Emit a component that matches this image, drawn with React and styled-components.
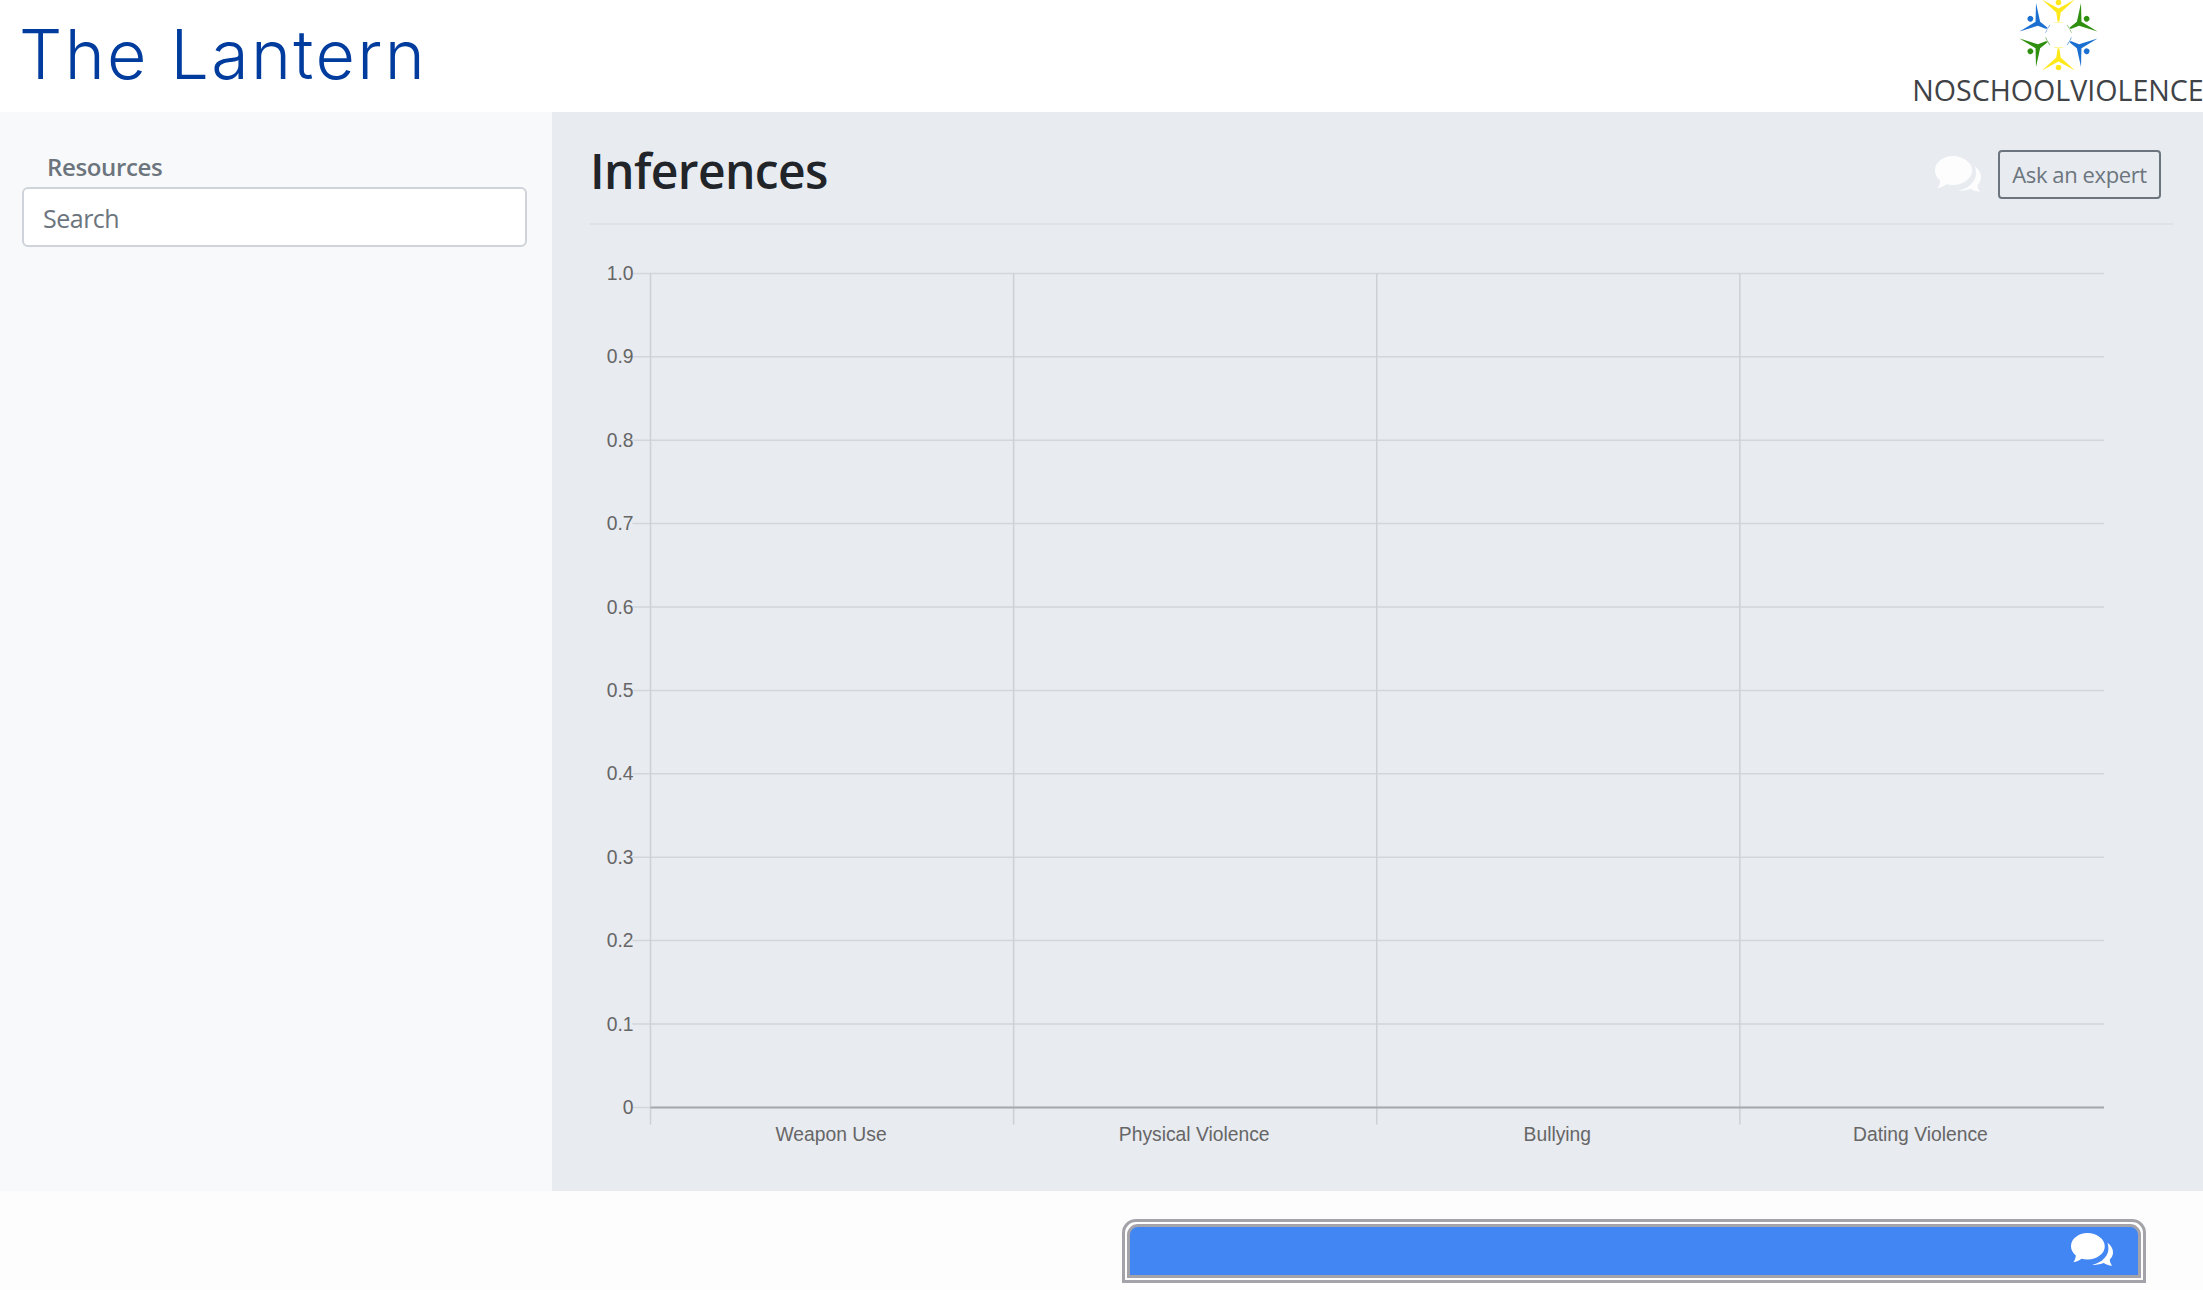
import React from "react";
import styled, { createGlobalStyle } from "styled-components";

const Global = createGlobalStyle`
  html, body { margin: 0; padding: 0; height: 100%; overflow: hidden; background: #fdfdfe; }
  * { box-sizing: border-box; }
  body { font-family: "Open Sans", "Noto Sans", sans-serif; }
`;

const Page = styled.div`
  width: 2203px;
  height: 1290px;
  display: grid;
  grid-template-rows: 112px 1079px 99px;
  overflow: hidden;
`;

const Header = styled.header`
  background: #fff;
  display: flex;
  justify-content: space-between;
  align-items: flex-start;
  padding-left: 19px;
`;

const Title = styled.h1`
  margin: 0;
  font-family: "Inter", sans-serif;
  font-weight: 300;
  font-size: 68px;
  line-height: 108px;
  color: #003c9e;
  letter-spacing: 2.4px;
`;

const LogoBlock = styled.div`
  width: 290px;
  height: 112px;
  display: flex;
  flex-direction: column;
  align-items: center;
`;

const LogoMark = styled.svg`
  width: 110px;
  height: 72px;
  display: block;
  flex: none;
`;

const LogoText = styled.div`
  font-size: 28.6px;
  line-height: 35px;
  white-space: nowrap;
  color: #3f4347;
`;

const Body = styled.div`
  display: grid;
  grid-template-columns: 552px 1fr;
  min-height: 0;
`;

const Sidebar = styled.aside`
  background: #f8f9fa;
  padding: 34px 0 0 22px;
`;

const SideLabel = styled.div`
  font-size: 24px;
  line-height: 41px;
  font-weight: 600;
  color: #6c757d;
  padding-left: 25px;
  letter-spacing: -0.35px;
`;

const SearchInput = styled.input`
  display: block;
  width: 505px;
  height: 60px;
  padding: 2px 19px 0;
  background: #fff;
  border: 2px solid #ced4da;
  border-radius: 6px;
  font: 400 25px "Open Sans", sans-serif;
  letter-spacing: -0.5px;
  &::placeholder { color: #6c757d; opacity: 1; }
`;

const Main = styled.main`
  background: #e8ebf0;
  padding: 0 30px 0 38px;
`;

const HeadRow = styled.div`
  height: 113px;
  display: flex;
  align-items: flex-start;
  border-bottom: 2px solid #dee1e6;
`;

const Heading = styled.h2`
  margin: 0;
  flex: 1;
  font-size: 48px;
  line-height: 118px;
  font-weight: 600;
  color: #212529;
  letter-spacing: -0.6px;
`;

const ChatGlyph = styled.svg`
  flex: none;
  display: block;
  fill: currentColor;
`;

const HeadChatGlyph = styled(ChatGlyph)`
  width: 46px;
  height: 36px;
  margin: 44px 17px 0 0;
  color: #fdfdfe;
`;

const AskButton = styled.button`
  width: 163px;
  height: 49px;
  margin: 38px 12px 0 0;
  background: transparent;
  border: 2px solid #6c757d;
  border-radius: 4px;
  color: #6c757d;
  font: 400 22px "Open Sans", sans-serif;
  letter-spacing: -0.4px;
  padding: 0 0 2px;
`;

const Chart = styled.svg`
  display: block;
  width: 1583px;
  height: 930px;
  text {
    font-family: "Liberation Sans", Arial, sans-serif;
    font-size: 19.3px;
    fill: #666;
  }
`;

const Footer = styled.footer`
  background: #fdfdfe;
  display: flex;
  justify-content: flex-end;
  padding: 28px 57px 7px 0;
`;

const ChatFrame = styled.div`
  width: 1024px;
  height: 64px;
  padding: 2px;
  border: 3px solid #a3a3a9;
  border-radius: 14px 14px 0 0;
  background: #fff;
  display: flex;
`;

const ChatBar = styled.div`
  flex: 1;
  border: 3px solid #a3a3a9;
  border-radius: 11px 11px 0 0;
  background: #4286f4;
  display: flex;
  justify-content: flex-end;
  align-items: center;
  padding: 0 25px 3px 0;
`;

const BarChatGlyph = styled(ChatGlyph)`
  width: 42px;
  height: 33px;
  color: #fff;
`;

const Y_TICKS = ["1.0", "0.9", "0.8", "0.7", "0.6", "0.5", "0.4", "0.3", "0.2", "0.1", "0"];
const CATEGORIES = ["Weapon Use", "Physical Violence", "Bullying", "Dating Violence"];
const X0 = 60.5;
const X1 = 1514;
const COL_X1 = 1513;
const Y0 = 48.4;
const STEP = 83.4;
const COL = (COL_X1 - X0) / 4;
const BASE = Y0 + 10 * STEP;

const FIGURES = [
  { angle: 0, color: "#ffe81a" },
  { angle: 60, color: "#2f8f0e" },
  { angle: 120, color: "#1a6fd0" },
  { angle: 180, color: "#ffe81a" },
  { angle: 240, color: "#2f8f0e" },
  { angle: 300, color: "#1a6fd0" },
];

function Bubbles({ as: Glyph }) {
  return (
    <Glyph viewBox="0 0 46 36" aria-hidden="true">
      <path d="M18 0C28 0 37 6.5 37 14.5C37 22.5 28.5 29 18 29C15.5 29 13.5 28.7 11.5 28.2C9 30 6 31.5 2.5 32C4 30 5 27.5 5.3 24.5C2 22 0 18.5 0 14.5C0 6.5 8 0 18 0Z" />
      <path d="M40 10.5C43.5 13 46 17 46 21C46 24.5 44.5 27 42.5 29C42.5 31.5 43.5 34 45 35.7C41 35.5 38 34.5 36 32.8C31 34.5 27 35 23 35C28 33.5 32 31.5 34 30C38.5 26.5 41 22 41 17.5C41 15 40.7 12.7 40 10.5Z" />
    </Glyph>
  );
}

function Logo() {
  return (
    <LogoMark viewBox="-55.5 -35 110 72" aria-hidden="true">
      {FIGURES.map((f) => (
        <g key={f.angle} transform={`rotate(${f.angle})`} fill={f.color}>
          <circle cx="0" cy="-32.5" r="2.8" />
          <path d="M-16.5 -35.5 L0 -26.5 L16.5 -35.5 L2.2 -22.5 L0.9 -13.5 L-0.9 -13.5 L-2.2 -22.5 Z" />
          <path d="M-4.5 -12.6 Q0 -13.6 4.5 -12.6 L4.5 -12 Q0 -12.9 -4.5 -12 Z" opacity="0.7" />
        </g>
      ))}
    </LogoMark>
  );
}

function InferenceChart() {
  return (
    <Chart viewBox="0 0 1583 930" aria-label="Inferences chart">
      {Y_TICKS.map((t, i) => {
        const y = Y0 + i * STEP;
        return (
          <g key={t}>
            <line x1={X0 - 18} x2={X1} y1={y} y2={y} stroke="#d2d5da" strokeWidth="1.5" />
            <text x={X0 - 17} y={y + 6.5} textAnchor="end">{t}</text>
          </g>
        );
      })}
      {[0, 1, 2, 3].map((i) => (
        <line
          key={i}
          x1={X0 + i * COL}
          x2={X0 + i * COL}
          y1={Y0}
          y2={BASE + 17}
          stroke="#cdd0d5"
          strokeWidth="1.5"
        />
      ))}
      <line x1={X0} x2={X1} y1={BASE} y2={BASE} stroke="#a6a8ac" strokeWidth="2" />
      {CATEGORIES.map((c, i) => (
        <text key={c} x={X0 + (i + 0.5) * COL - 1} y={BASE + 34} textAnchor="middle">{c}</text>
      ))}
    </Chart>
  );
}

export default function App() {
  return (
    <Page>
      <Global />
      <Header>
        <Title>The Lantern</Title>
        <LogoBlock>
          <Logo />
          <LogoText>NOSCHOOLVIOLENCE</LogoText>
        </LogoBlock>
      </Header>
      <Body>
        <Sidebar>
          <SideLabel>Resources</SideLabel>
          <SearchInput placeholder="Search" />
        </Sidebar>
        <Main>
          <HeadRow>
            <Heading>Inferences</Heading>
            <Bubbles as={HeadChatGlyph} />
            <AskButton>Ask an expert</AskButton>
          </HeadRow>
          <InferenceChart />
        </Main>
      </Body>
      <Footer>
        <ChatFrame>
          <ChatBar>
            <Bubbles as={BarChatGlyph} />
          </ChatBar>
        </ChatFrame>
      </Footer>
    </Page>
  );
}
